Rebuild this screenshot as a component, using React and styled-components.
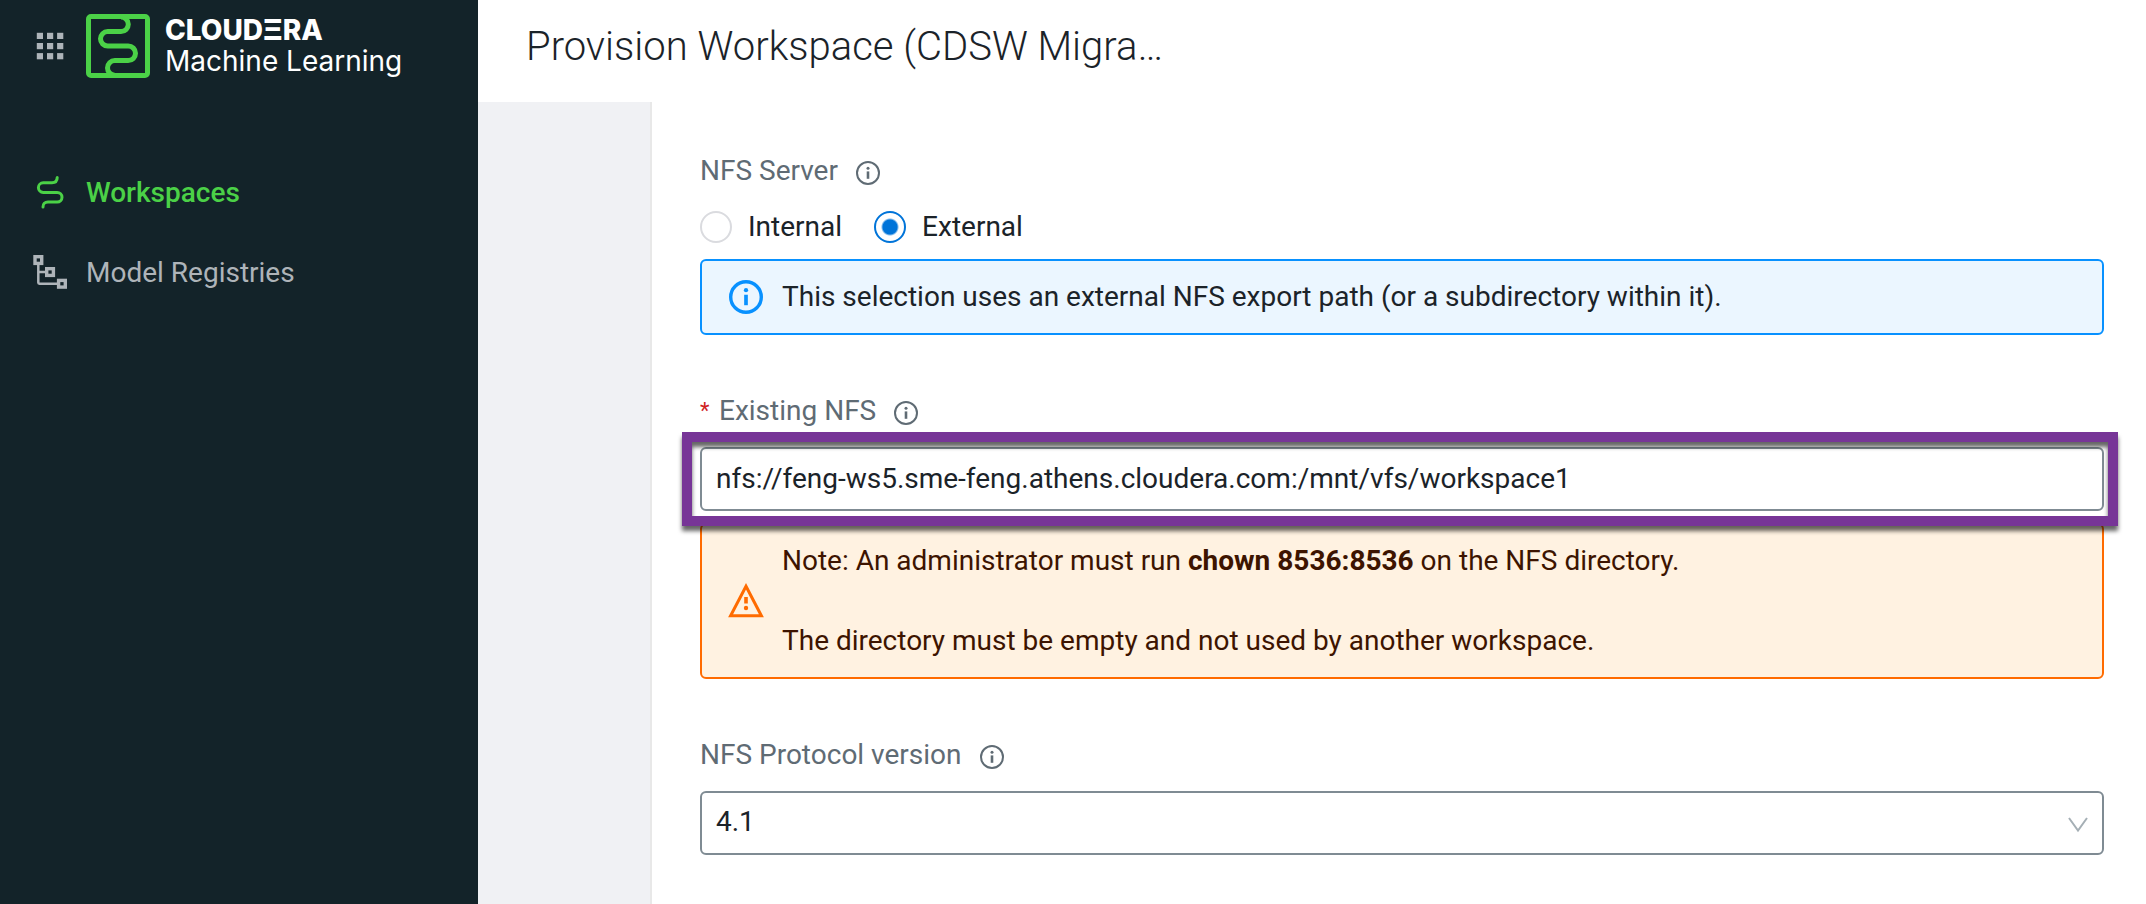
import React from "react";
import styled, { createGlobalStyle } from "styled-components";

const GlobalStyle = createGlobalStyle`
  *, *::before, *::after { box-sizing: border-box; }
  body {
    margin: 0;
    background: #ffffff;
    color: #1b2329;
    font-family: Roboto, "Liberation Sans", sans-serif;
    font-size: 28px;
    line-height: 40px;
  }
`;

const Page = styled.div`
  display: flex;
  min-height: 100vh;
`;

const Sidebar = styled.aside`
  flex: none;
  width: 478px;
  background: #132329;
`;

const Brand = styled.div`
  display: flex;
  align-items: center;
  height: 92px;
  padding-left: 36px;
`;

const AppsButton = styled.button`
  display: flex;
  margin: 0 22px 0 0;
  padding: 0;
  border: 0;
  background: none;
  color: #aeb4b9;
  cursor: pointer;
`;

const BrandText = styled.div`
  display: flex;
  flex-direction: column;
  margin-left: 15px;
  color: #ffffff;
  font-family: Inter, sans-serif;
  line-height: 31px;
`;

const BrandName = styled.span`
  font-weight: 800;
`;

const Nav = styled.nav`
  display: flex;
  flex-direction: column;
  padding-top: 61px;
`;

const NavLink = styled.a`
  display: grid;
  grid-template-columns: 36px 1fr;
  column-gap: 18px;
  align-items: center;
  height: 80px;
  padding-left: 32px;
  color: ${(p) => (p.$active ? "#4bd147" : "#aeb4b9")};
  font-weight: ${(p) => (p.$active ? 500 : 400)};
  text-decoration: none;

  svg {
    justify-self: center;
    margin-bottom: 3px;
  }
`;

const Main = styled.main`
  flex: 1;
  min-width: 0;
  display: flex;
  flex-direction: column;
`;

const Header = styled.header`
  display: flex;
  align-items: center;
  height: 102px;
  padding: 0 48px 8px;
`;

const Title = styled.h1`
  margin: 0;
  font-size: 40px;
  line-height: 48px;
  font-weight: 300;
`;

const Body = styled.div`
  flex: 1;
  display: flex;
`;

const StepsRail = styled.div`
  flex: none;
  width: 174px;
  border-right: 2px solid #e8e8e8;
  background: #f0f1f4;
`;

const Form = styled.form`
  flex: 1;
  min-width: 0;
  display: flex;
  flex-direction: column;
  gap: 56px;
  padding: 49px 42px 48px 48px;
`;

const Field = styled.div`
  display: flex;
  flex-direction: column;
  gap: 12px;
  min-width: 0;
`;

const Control = styled.div`
  display: flex;
  flex-direction: column;
  gap: 16px;
`;

const LabelRow = styled.div`
  display: flex;
  align-items: center;
  color: #5f6b74;

  svg { margin: 4px 0 0 18px; }
`;

const Required = styled.span`
  width: 19px;
  color: #d0221f;
  font-size: 22px;
`;

const RadioRow = styled.div`
  display: flex;
  gap: 32px;
`;

const RadioLabel = styled.label`
  display: flex;
  align-items: center;
  gap: 16px;
  cursor: pointer;
`;

const Radio = styled.input`
  appearance: none;
  width: 32px;
  height: 32px;
  margin: 0;
  border: 2px solid #dadbdf;
  border-radius: 50%;
  background: #ffffff;

  &:checked {
    border-color: #0074d9;
    background: radial-gradient(circle, #0074d9 0 7px, #ffffff 9px);
  }
`;

const tones = {
  info: { line: "#0891ff", fill: "#ebf6ff", text: "#1b2329" },
  warning: { line: "#ff6b00", fill: "#fff2e1", text: "#3d1400" },
};

const Alert = styled.div`
  display: grid;
  grid-template-columns: 36px 1fr;
  column-gap: 18px;
  align-items: center;
  padding: 16px 26px;
  border: 2px solid ${(p) => tones[p.$tone].line};
  border-radius: 6px;
  background: ${(p) => tones[p.$tone].fill};
  color: ${(p) => tones[p.$tone].text};

  svg {
    justify-self: center;
    color: ${(p) => tones[p.$tone].line};
  }
`;

const AlertLines = styled.div`
  display: flex;
  flex-direction: column;
  gap: 40px;

  p { margin: 0; }
  strong { font-weight: 700; }
`;

const Highlight = styled.div`
  position: relative;

  &::after {
    content: "";
    position: absolute;
    inset: -15px -14px -15px -18px;
    border: 10px solid #773597;
    filter: drop-shadow(0 5px 2px rgba(0, 0, 0, 0.6));
    pointer-events: none;
  }
`;

const TextInput = styled.input`
  display: block;
  width: 100%;
  height: 64px;
  padding: 0 14px 2px;
  border: 2px solid #7f8b93;
  border-radius: 6px;
  background: #ffffff;
  color: #1b2329;
  font: inherit;
  outline: none;
`;

const SelectBox = styled.div`
  position: relative;

  svg {
    position: absolute;
    top: 26px;
    right: 16px;
    color: #a5afb5;
    pointer-events: none;
  }
`;

const Select = styled(TextInput).attrs({ as: "select" })`
  appearance: none;
`;

const AppsIcon = () => (
  <svg width="28" height="28" viewBox="0 0 28 28" fill="currentColor" aria-hidden="true">
    {[0.8, 11, 21.1].map((y) =>
      [0.8, 11, 21.1].map((x) => <rect key={`${x}-${y}`} x={x} y={y} width="6.2" height="6.2" />)
    )}
  </svg>
);

const LogoMark = () => (
  <svg width="64" height="64" viewBox="0 0 64 64" fill="none" stroke="#4bd147" strokeWidth="5" aria-hidden="true">
    <rect x="2.5" y="2.5" width="59" height="59" rx="2.5" />
    <path d="M35 3a7.3 7.3 0 0 1 0 14.6H21.7a7.2 7.2 0 0 0 0 14.4H42.2a7.3 7.3 0 0 1 0 14.6H28.8a7.3 7.3 0 0 0 0 14.6" />
  </svg>
);

const WorkspacesIcon = () => (
  <svg width="28" height="34" viewBox="36 174 28 34" fill="none" stroke="currentColor" strokeWidth="3" strokeLinecap="round" aria-hidden="true">
    <path d="M57.2 176.6C57.2 180 55.4 181.8 52 181.8H43.2a4.8 4.8 0 0 0 0 9.6H57.2a4.8 4.8 0 0 1 0 9.6H48C44.8 201 43 202.8 43 206" />
  </svg>
);

const RegistriesIcon = () => (
  <svg width="34" height="34" viewBox="0 0 34 34" fill="none" stroke="currentColor" aria-hidden="true">
    <g strokeWidth="3.4">
      <rect x="2" y="1.7" width="6.7" height="6.7" />
      <rect x="13.7" y="13.7" width="6.7" height="6.7" />
      <rect x="25.6" y="25.4" width="6.7" height="6.7" />
    </g>
    <path d="M5.3 10V27.6Q5.3 28.7 6.4 28.7H24M5.3 17H12" strokeWidth="2.5" />
  </svg>
);

const InfoIcon = ({ size = 24, weight = 2 }) => (
  <svg width={size} height={size} viewBox="0 0 24 24" fill="none" stroke="currentColor" aria-hidden="true">
    <circle cx="12" cy="12" r={12 - weight / 2} strokeWidth={weight} />
    <circle cx="12" cy="7.2" r="1.5" fill="currentColor" stroke="none" />
    <path d="M12 10.4V17.8" strokeWidth="2.6" />
  </svg>
);

const WarningIcon = () => (
  <svg width="36" height="36" viewBox="0 0 36 36" fill="none" stroke="currentColor" strokeWidth="3" aria-hidden="true">
    <path d="M18 3.3L33.4 32.8H2.6Z" />
    <path d="M18 14V20.5" strokeWidth="3.6" />
    <circle cx="18" cy="25" r="2.2" fill="currentColor" stroke="none" />
  </svg>
);

const ChevronIcon = () => (
  <svg width="20" height="16" viewBox="0 0 20 16" fill="none" stroke="currentColor" strokeWidth="2" aria-hidden="true">
    <path d="M1 1L10 13.5L19 1" />
  </svg>
);

export default function App() {
  return (
    <>
      <GlobalStyle />
      <Page>
        <Sidebar>
          <Brand>
            <AppsButton type="button" aria-label="Applications">
              <AppsIcon />
            </AppsButton>
            <LogoMark />
            <BrandText>
              <BrandName>CLOUDΞRA</BrandName>
              <span>Machine Learning</span>
            </BrandText>
          </Brand>
          <Nav>
            <NavLink href="#workspaces" $active>
              <WorkspacesIcon />
              Workspaces
            </NavLink>
            <NavLink href="#registries">
              <RegistriesIcon />
              Model Registries
            </NavLink>
          </Nav>
        </Sidebar>
        <Main>
          <Header>
            <Title>Provision Workspace (CDSW Migra…</Title>
          </Header>
          <Body>
            <StepsRail />
            <Form>
              <Field>
                <Control role="radiogroup" aria-labelledby="nfs-server">
                  <LabelRow>
                    <span id="nfs-server">NFS Server</span>
                    <InfoIcon />
                  </LabelRow>
                  <RadioRow>
                    <RadioLabel>
                      <Radio type="radio" name="nfs" value="internal" />
                      Internal
                    </RadioLabel>
                    <RadioLabel>
                      <Radio type="radio" name="nfs" value="external" defaultChecked />
                      External
                    </RadioLabel>
                  </RadioRow>
                </Control>
                <Alert $tone="info">
                  <InfoIcon size={34} weight={2.4} />
                  <AlertLines>
                    <p>This selection uses an external NFS export path (or a subdirectory within it).</p>
                  </AlertLines>
                </Alert>
              </Field>
              <Field>
                <Control>
                  <LabelRow>
                    <Required>*</Required>
                    <label htmlFor="existing-nfs">Existing NFS</label>
                    <InfoIcon />
                  </LabelRow>
                  <Highlight>
                    <TextInput
                      id="existing-nfs"
                      type="text"
                      defaultValue="nfs://feng-ws5.sme-feng.athens.cloudera.com:/mnt/vfs/workspace1"
                    />
                  </Highlight>
                </Control>
                <Alert $tone="warning">
                  <WarningIcon />
                  <AlertLines>
                    <p>
                      Note: An administrator must run <strong>chown 8536:8536</strong> on the NFS directory.
                    </p>
                    <p>The directory must be empty and not used by another workspace.</p>
                  </AlertLines>
                </Alert>
              </Field>
              <Control>
                <LabelRow>
                  <label htmlFor="nfs-version">NFS Protocol version</label>
                  <InfoIcon />
                </LabelRow>
                <SelectBox>
                  <Select id="nfs-version" defaultValue="4.1">
                    <option value="4.1">4.1</option>
                  </Select>
                  <ChevronIcon />
                </SelectBox>
              </Control>
            </Form>
          </Body>
        </Main>
      </Page>
    </>
  );
}
